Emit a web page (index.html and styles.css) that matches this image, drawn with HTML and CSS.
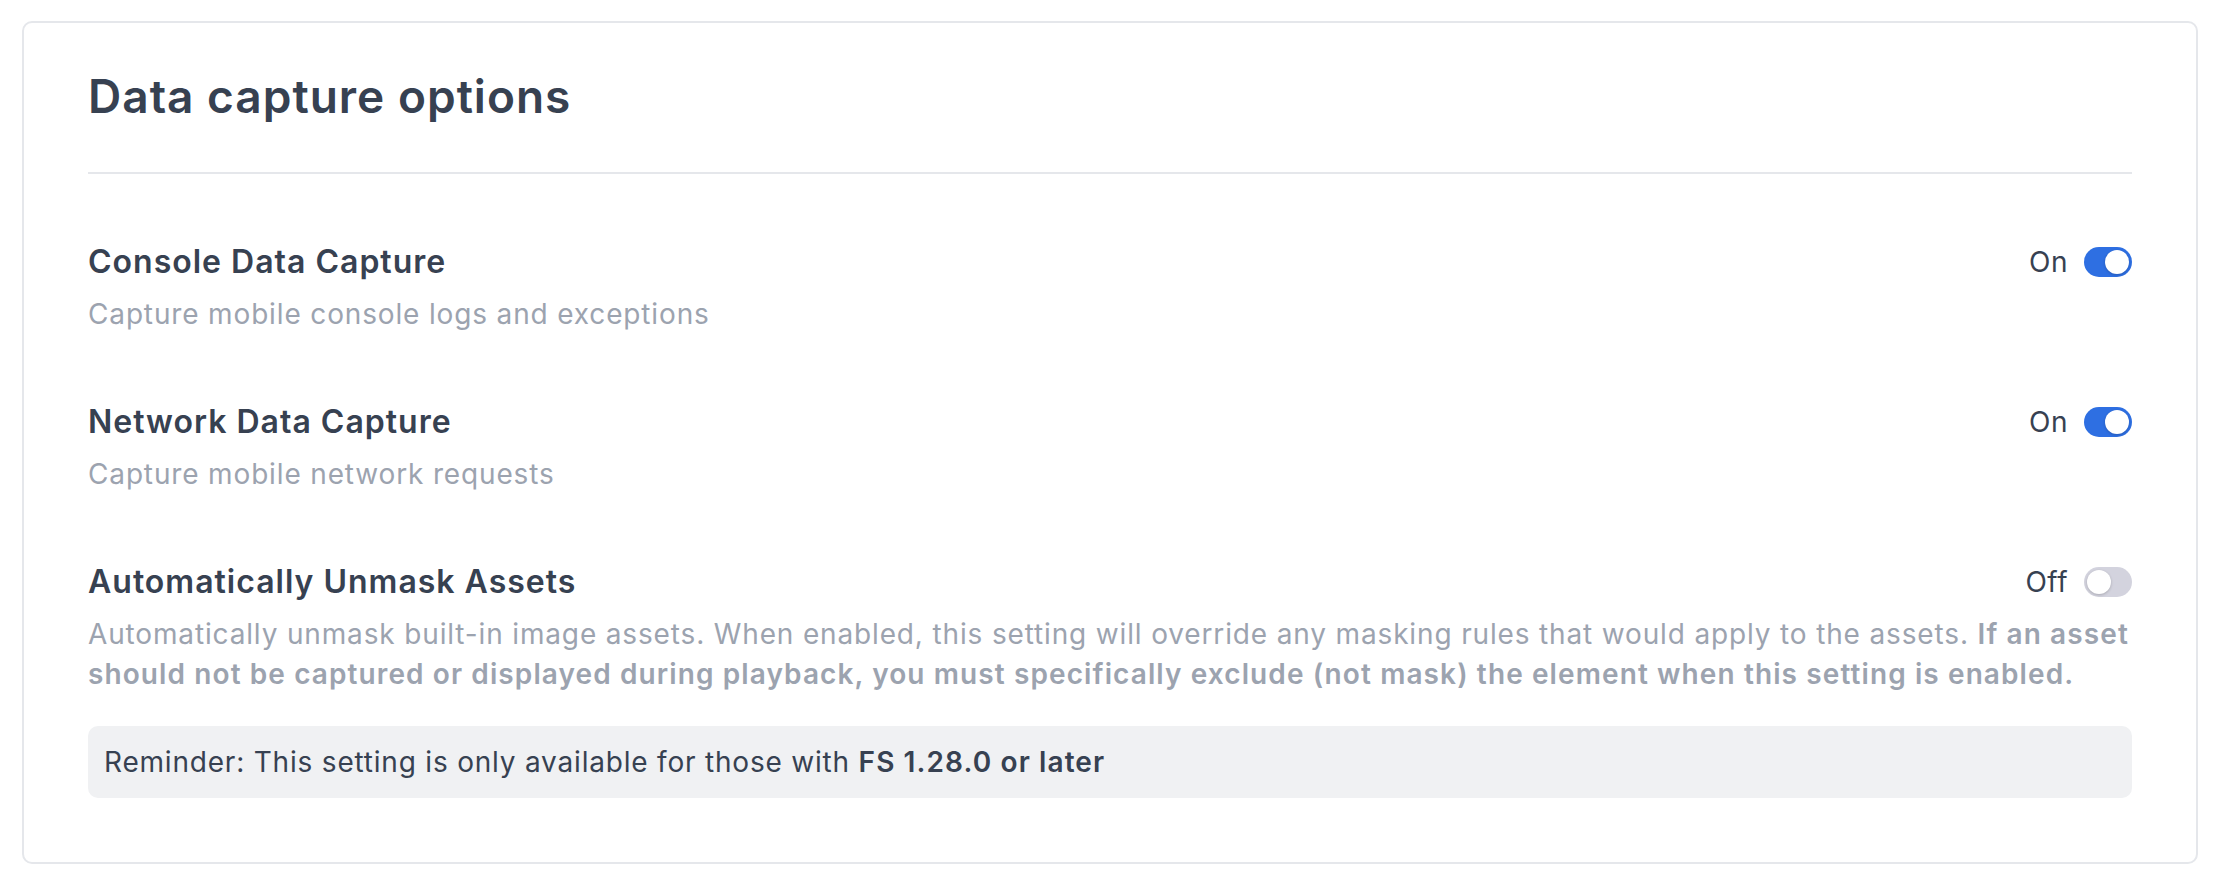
FILE: index.html
```html
<!DOCTYPE html>
<html lang="en">
<head>
<meta charset="utf-8">
<title>Data capture options</title>
<link rel="stylesheet" href="styles.css">
</head>
<body>
<section class="card">
  <h1 class="card-title">Data capture options</h1>
  <div class="settings">
    <div class="setting">
      <div class="setting-head">
        <h2 class="setting-name">Console Data Capture</h2>
        <label class="switch-wrap">
          <span class="switch-label">On</span>
          <span class="switch switch-on"><span class="knob"></span></span>
        </label>
      </div>
      <p class="setting-desc">Capture mobile console logs and exceptions</p>
    </div>
    <div class="setting">
      <div class="setting-head">
        <h2 class="setting-name">Network Data Capture</h2>
        <label class="switch-wrap">
          <span class="switch-label">On</span>
          <span class="switch switch-on"><span class="knob"></span></span>
        </label>
      </div>
      <p class="setting-desc">Capture mobile network requests</p>
    </div>
    <div class="setting">
      <div class="setting-head">
        <h2 class="setting-name">Automatically Unmask Assets</h2>
        <label class="switch-wrap">
          <span class="switch-label">Off</span>
          <span class="switch switch-off"><span class="knob"></span></span>
        </label>
      </div>
      <p class="setting-desc">Automatically unmask built-in image assets. When enabled, this setting will override any masking rules that would apply to the assets. <strong>If an asset should not be captured or displayed during playback, you must specifically exclude (not mask) the element when this setting is enabled.</strong></p>
      <div class="reminder">Reminder: This setting is only available for those with <strong>FS 1.28.0 or later</strong></div>
    </div>
  </div>
</section>
</body>
</html>
```
FILE: styles.css
```css
* { box-sizing: border-box; }

html, body {
  margin: 0;
  background: #ffffff;
}

body {
  padding: 21px 22px 20px 22px;
  font-family: Inter, "Noto Sans", "Liberation Sans", sans-serif;
  color: #374151;
}

.card {
  border: 2px solid #e5e7eb;
  border-radius: 10px;
  padding: 41px 64px 64px 64px;
  background: #ffffff;
}

.card-title {
  margin: 0;
  font-size: 46px;
  line-height: 64px;
  font-weight: 600;
  letter-spacing: 1px;
  color: #374151;
  padding-bottom: 44px;
  border-bottom: 2px solid #e5e7eb;
}

.settings {
  display: flex;
  flex-direction: column;
  gap: 64px;
  padding-top: 64px;
}

.setting-head {
  display: flex;
  align-items: center;
  justify-content: space-between;
}

.setting-name {
  margin: 0;
  font-size: 32px;
  line-height: 48px;
  font-weight: 600;
  letter-spacing: 1px;
  color: #374151;
}

.setting-desc {
  margin: 8px 0 0 0;
  font-size: 28px;
  line-height: 40px;
  letter-spacing: 0.85px;
  color: #9ca3af;
}

.setting-desc strong {
  font-weight: 600;
  letter-spacing: 1.1px;
}

.switch-wrap {
  display: flex;
  align-items: center;
  gap: 16px;
}

.switch-label {
  font-size: 28px;
  line-height: 40px;
  letter-spacing: 0.5px;
  color: #374151;
}

.switch {
  position: relative;
  display: block;
  width: 48px;
  height: 30px;
  border-radius: 15px;
}

.switch-on { background: #2e6fe2; }
.switch-off { background: #d3d3de; }

.knob {
  position: absolute;
  top: 3px;
  width: 24px;
  height: 24px;
  border-radius: 50%;
  background: #ffffff;
  box-shadow: 0 1px 3px rgba(0, 0, 0, 0.2);
}

.switch-on .knob { left: 21px; }
.switch-off .knob { left: 3px; }

.reminder {
  margin-top: 32px;
  background: #f0f1f3;
  border-radius: 10px;
  padding: 16px 16px;
  font-size: 28px;
  line-height: 40px;
  letter-spacing: 0.8px;
  color: #374151;
}

.reminder strong {
  font-weight: 600;
  letter-spacing: 1.1px;
}
```
